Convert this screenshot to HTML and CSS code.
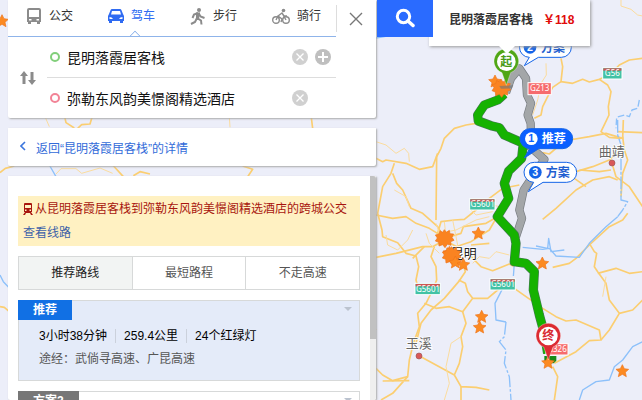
FILE: index.html
```html
<!DOCTYPE html>
<html lang="zh-CN">
<head>
<meta charset="utf-8">
<meta name="viewport" content="width=device-width, initial-scale=1">
<title>驾车路线</title>
<link rel="stylesheet" href="styles.css">
</head>
<body>
<svg class="map" viewBox="-1128 0 1926 1200" preserveAspectRatio="xMidYMin slice" role="img" aria-label="昆明路线地图">
  <defs>
    <path id="star" d="M0-19 6-7 19-5 9 4 12 17 0 10-12 17-9 4-19-5-6-7Z" fill="#fc8a22" stroke="#ee741b" stroke-width="2" stroke-linejoin="round"/>
    <path id="burst" d="M0-26 6-18 15-24 17-14 28-13 23-3 29 6 19 10 20 21 9 18 2 28-5 19-16 23-17 12-27 8-21-1-27-10-16-13-13-23-5-18Z" fill="#fa8321" stroke="#ed741d" stroke-width="2"/>
  </defs>

  <g class="road">
    <path d="M555 175 560 200 555 245 590 250 620 238 640 246 670 238 700 225 730 195 760 180 800 175"/>
    <path d="M555 245 530 262 515 290 500 320 495 345 475 355"/>
    <path d="M670 238 695 255 705 275 697 320 699 345 687 370 675 395 700 412 735 415"/>
    <path d="M300 370 270 375 235 385 205 415 195 445 182 470 180 660"/>
    <path d="M0 475 20 485 30 480 90 490 130 508 170 500 185 460"/>
    <path d="M55 490 45 520 20 560 5 640 18 690 20 710 65 728 90 760 120 768 128 800 120 840 128 870 150 880"/>
    <path d="M0 645 50 655 90 650 120 670 160 685 200 710"/>
    <path d="M50 520 62 550 80 570 105 625 140 640 185 680 205 715"/>
    <path d="M185 700 195 665 235 660 265 658 300 630 340 595 380 565 430 555"/>
    <path d="M205 715 255 700 262 680 330 670 362 652 340 690 285 725 240 740"/>
    <path d="M0 772 60 760 140 740 170 740 205 720 250 745 240 780"/>
    <path d="M145 740 110 775M175 740 165 770 180 800 182 840 170 870 150 910 125 940 130 980 112 1030 100 1080 95 1130 50 1142 20 1125 0 1105"/>
    <path d="M95 1130 50 1180 15 1200M100 1142 20 1143"/>
    <path d="M262 795 268 815 248 845 205 895 165 930 135 970 120 1030"/>
    <path d="M145 910 180 925 220 920 260 935 290 895M248 840 268 850 275 875 290 895 335 895 365 870 380 865"/>
    <path d="M260 935 270 970 255 1010 260 1040 250 1090 235 1125 255 1160 255 1200M125 1065 180 1095 235 1125M255 1160 300 1162 340 1170"/>
    <path d="M285 770 315 800 350 812 400 792 415 800M285 735 340 730"/>
    <path d="M415 865 450 890 500 925 540 950 570 963 600 960 670 990 675 1020 640 1022 600 1055 535 1090M530 1100 545 1130 535 1200"/>
    <path d="M675 1020 700 990 730 940 700 900 690 850 665 815 655 800 662 760 655 755 640 730M665 820 720 805 760 820 800 815M730 940 770 930 800 900"/>
    <path d="M500 458 520 462 540 445 580 420 640 410 690 400 740 415 742 360"/>
    <path d="M725 395 800 398M740 410 745 450 755 480 740 520 735 590M705 480 720 530 760 560 800 620"/>
    <path d="M500 658 540 625 600 570 650 540 700 530 725 540M600 515 650 500 700 480 735 445M610 510 670 515 705 510M595 535 630 560"/>
    <path d="M530 802 580 790 600 775 640 735 700 680 740 660 755 640"/>
    <path d="M-935 345-930 368-905 384M-850 345-858 372-883 374-895 385M-195 345-190 385M-1128 518-1112 505-1085 498M-790 495-758 530M-728 527-708 515-678 522M-400 498-370 508-385 530M-1128 920-1115 922-1100 935"/>
    <path d="M-28 960 0 990"/>
  </g>
  <g class="lane">
    <path d="M510 190 511 225 495 250 485 300 470 345M735 0 735 18 765 28 785 45 800 48"/>
    <path d="M0 425 30 435 60 460 85 445 98 460 100 485M55 570 90 590 100 620M30 705 35 735 65 750 95 720 110 690"/>
    <path d="M180 670 190 700 240 690 300 660 340 650M230 660 245 735M205 665 210 710M280 625 300 645 350 635M290 790 310 770 340 775 360 755 400 765M255 1010 225 1030 210 1100 220 1150 205 1200M690 830 680 890"/>
    <path d="M305 600 350 615 370 620M150 700 160 730 190 760"/>
    <path d="M-993 350-980 380M-440 350-438 382M-960 522-945 506-900 506-883 520-828 504-790 520"/>
  </g>
  <g class="river">
    <path d="M725 360 725 405 735 435 735 600 755 605 740 630 725 650" stroke-dasharray="38 5 9 5"/>
    <path d="M725 650 690 680 640 730 610 772 540 768 520 745 500 748 440 742"/>
    <path d="M790 300 785 325 768 330 760 350 745 345 722 352 720 385" stroke-dasharray="20 7"/>
    <path d="M380 865 357 910 360 960 390 966"/>
    <path d="M415 790 412 830M390 966 385 1010 370 1025 390 1050 385 1090 400 1130 405 1200" stroke-dasharray="38 6 8 6"/>
    <path d="M800 1025 770 1040 740 1080 715 1100 700 1140 660 1145 620 1170 610 1200M0 114 50 105 70 100M-1128 825-1118 845-1100 864M-980 495-960 530"/>
    <path d="M480 738 515 745 518 715 525 755 565 750"/>
  </g>

  <g class="route">
    <path class="alt-edge" d="M390 278 405 235 430 205 450 235 453 285 465 310 455 345 464 370 465 400 462 440 505 478 480 515 443 570 430 630 438 655 420 710"/>
    <path class="alt" d="M390 278 405 235 430 205 450 235 453 285 465 310 455 345 464 370 465 400 462 440 505 478 480 515 443 570 430 630 438 655 420 710"/>
    <path class="main-edge" d="M385 282 365 300 325 315 305 345 307 363 345 377 370 383 385 405 442 430 437 475 398 513 385 550 398 595 364 650 415 705 420 730 415 785 450 790 475 815 472 870 490 945 505 1000 515 1060"/>
    <path class="main" d="M385 282 365 300 325 315 305 345 307 363 345 377 370 383 385 405 442 430 437 475 398 513 385 550 398 595 364 650 415 705 420 730 415 785 450 790 475 815 472 870 490 945 505 1000 515 1060"/>
  </g>

  <g class="shield">
    <rect x="456" y="248" width="70" height="36" fill="#f66b6d"/><text x="491" y="273">G213</text>
    <rect x="680" y="203" width="58" height="34" fill="#42c2a5"/><path d="M682 205h54v7h-54z" fill="#cf5552"/><text x="709" y="229">G56</text>
    <rect x="281" y="596" width="76" height="34" fill="#42c2a5"/><path d="M283 598h72v7h-72z" fill="#cf5552"/><text x="320" y="622">G5601</text>
    <rect x="117" y="850" width="76" height="34" fill="#42c2a5"/><path d="M119 852h72v7h-72z" fill="#cf5552"/><text x="156" y="876">G5601</text>
    <rect x="342" y="836" width="76" height="34" fill="#42c2a5"/><path d="M344 838h72v7h-72z" fill="#cf5552"/><text x="381" y="862">G5601</text>
    <rect x="510" y="1031" width="66" height="34" fill="#f66b6d"/><text x="543" y="1056">G326</text>
  </g>

  <g class="place">
    <text x="224" y="775" class="city">昆明</text>
    <text x="668" y="467">曲靖</text><circle cx="708" cy="489" r="9"/>
    <text x="89" y="1045">玉溪</text><circle cx="129" cy="1068" r="9"/>
  </g>

  <use href="#burst" x="205" y="715"/>
  <use href="#star" x="220" y="758"/><use href="#burst" x="226" y="766"/><use href="#star" x="238" y="787"/><use href="#star" x="262" y="794"/>
  <use href="#star" x="307" y="700"/><use href="#star" x="499" y="790"/>
  <use href="#star" x="317" y="950"/><use href="#star" x="311" y="982"/><use href="#star" x="739" y="1113"/>
  <use href="#star" x="357" y="244"/><use href="#burst" x="375" y="264"/><use href="#star" x="-1122" y="63"/>
  <path d="M370 258 412 256 408 265 375 266Z" fill="#777" opacity=".65"/>
  <path d="M505 1068h36v14l-8 8h-28z" fill="#168b18"/><use href="#star" x="516" y="1088"/>

  <g class="pin">
    <path d="M391 256 378 218A37 37 0 1 1 404 218Z" fill="#50a616"/><circle cx="391" cy="185" r="28" fill="#fff"/><text x="391" y="198" fill="#4a9b17">起</text>
    <path d="M517 1080 503 1041A37 37 0 1 1 531 1041Z" fill="#dc2b32"/><circle cx="517" cy="1008" r="28" fill="#fff"/><text x="517" y="1021" fill="#d92b32">终</text>
  </g>

  <g class="callout">
    <path d="M461 112H556A30 30 0 0 1 556 172H487L445 197 460 172A30 30 0 0 1 461 112Z"/><circle cx="462" cy="142" r="19"/><text class="num" x="462" y="153">2</text><text x="495" y="155">方案</text>
    <g class="chosen"><path d="M463 386H560A30 30 0 0 1 560 446H488L445 474 461 446A30 30 0 0 1 463 386Z"/><circle cx="466" cy="416" r="19"/><text class="num" x="466" y="427">1</text><text x="497" y="429">推荐</text></g>
    <path d="M475 487H572A30 30 0 0 1 572 547H501L457 575 473 547A30 30 0 0 1 475 487Z"/><circle cx="478" cy="517" r="19"/><text class="num" x="478" y="528">3</text><text x="509" y="530">方案</text>
  </g>
</svg>

<aside class="hotel-tip"><strong>昆明落霞居客栈</strong><strong class="price">￥118</strong></aside>

<main class="overlay">
  <div class="sidebar">
    <section class="panel search">
      <nav class="modes">
        <button class="mode" type="button">
          <svg width="16" height="16" viewBox="0 0 16 16"><path fill="#8b8b8b" fill-rule="evenodd" d="M3 0h10q2 0 2 2v12H1V2q0-2 2-2Zm0 2v7h10V2ZM3 11v1.500h2.500v-1.500Zm7.500 0v1.500h2.500v-1.500ZM2 14h3v2H2Zm9 0h3v2h-3Z"/></svg>公交</button>
        <button class="mode active" type="button">
          <svg width="16" height="16" viewBox="0 0 16 16"><path fill="#2f6bf2" fill-rule="evenodd" d="M4 1h8q1 0 1.400 1L15 6l1 2v5H0V8l1-2L2.600 2Q3 1 4 1Zm0 2L3 6.500h10L12 3ZM1.500 9v2H5Q4 9 1.500 9Zm13 0Q12 9 11 11h3.500ZM1 13h3v2H1Zm11 0h3v2h-3Z"/></svg>驾车</button>
        <button class="mode" type="button">
          <svg width="16" height="17" viewBox="0 0 16 17"><circle cx="9" cy="2" r="2" fill="#8b8b8b"/><path d="M8 5 4 6.500 2.500 10M8.500 5l2 3.500 4 1.500M8.500 5 7 10l4 2.500.5 4M7 10l-2 4-4 2" fill="none" stroke="#8b8b8b" stroke-width="2"/><path d="M6 4.500h4L9 11H6Z" fill="#8b8b8b"/></svg>步行</button>
        <button class="mode" type="button">
          <svg width="18" height="17" viewBox="0 0 18 17"><g fill="none" stroke="#8b8b8b" stroke-width="1.400"><circle cx="4" cy="12" r="3.300"/><circle cx="14" cy="12" r="3.300"/><path d="M4 12 6 8l4 3-1 3M6 8l4-3 2 3h3M10 5l4 7"/></g><circle cx="11.500" cy="2.500" r="1.800" fill="#8b8b8b"/></svg>骑行</button>
      </nav>
      <button class="close" type="button" aria-label="关闭"><svg width="14" height="14" viewBox="0 0 14 14"><path d="m1 1 12 12M13 1 1 13" stroke="#777" stroke-width="1.400"/></svg></button>
      <form class="stops">
        <button class="swap" type="button" aria-label="交换起终点"><svg width="16" height="14" viewBox="0 0 16 14"><path d="M4 0 8 5H5.500v8h-3V5H0ZM12 14 8 9h2.500V1h3v8H16Z" fill="#8b8b8b"/></svg></button>
        <div class="fields">
          <div class="stop"><i class="dot from"></i><input type="text" aria-label="起点" value="昆明落霞居客栈">
            <button type="button" aria-label="清除起点"><svg width="16" height="16" viewBox="0 0 16 16"><circle cx="8" cy="8" r="8" fill="#d0d0d0"/><path d="m4.500 4.500 7 7m0-7-7 7" stroke="#fff" stroke-width="1.300"/></svg></button>
            <button type="button" aria-label="添加途经点"><svg width="16" height="16" viewBox="0 0 16 16"><circle cx="8" cy="8" r="8" fill="#bfbfbf"/><path d="M3 8h10M8 3v10" stroke="#fff" stroke-width="2"/></svg></button></div>
          <div class="stop"><i class="dot to"></i><input type="text" aria-label="终点" value="弥勒东风韵美憬阁精选酒店">
            <button type="button" aria-label="清除终点"><svg width="16" height="16" viewBox="0 0 16 16"><circle cx="8" cy="8" r="8" fill="#d0d0d0"/><path d="m4.500 4.500 7 7m0-7-7 7" stroke="#fff" stroke-width="1.300"/></svg></button></div>
        </div>
      </form>
    </section>

    <section class="panel back"><a href="#detail"><svg width="6" height="10" viewBox="0 0 6 10"><path d="M5 1 1 5l4 4" fill="none" stroke="#3c76dd" stroke-width="1.600"/></svg>返回“昆明落霞居客栈”的详情</a></section>

    <section class="panel results">
      <div class="list">
        <div class="notice">
          <p><svg width="10" height="12" viewBox="0 0 10 12"><path fill="#a8160e" fill-rule="evenodd" d="M2 0h6q1 0 1 1v8H8l2 3H8L7 10H3l-1 2H0l2-3H1V1q0-1 1-1Zm0 2v3h6V2Zm0 4.500V8h1.500V6.500Zm4.500 0V8H8V6.500Z"/></svg>从昆明落霞居客栈到弥勒东风韵美憬阁精选酒店的跨城公交</p>
          <a href="#bus">查看线路</a>
        </div>
        <div class="filters">
          <button class="on" type="button">推荐路线</button><button type="button">最短路程</button><button type="button">不走高速</button>
        </div>
        <article class="plan selected">
          <h2>推荐</h2>
          <p class="facts"><span>3小时38分钟</span><span>259.4公里</span><span>24个红绿灯</span></p>
          <p class="via">途经：武倘寻高速、广昆高速</p>
        </article>
        <article class="plan">
          <h2>方案2</h2>
        </article>
      </div>
      <div class="track"><div class="thumb"></div></div>
    </section>
  </div>
  <button class="go" type="button" aria-label="搜索"><svg width="20" height="20" viewBox="0 0 20 20"><circle cx="8.500" cy="8.500" r="6.200" fill="none" stroke="#fff" stroke-width="3"/><path d="m13 13 5 4.500" stroke="#fff" stroke-width="3.500" stroke-linecap="round"/></svg></button>
</main>
</body>
</html>
```
FILE: styles.css
```css
* { box-sizing: border-box; }

body {
  margin: 0;
  height: 100vh;
  overflow: hidden;
  position: relative;
  background: #eceef9;
  color: #333;
  font: 12px/20px "Liberation Sans", "Noto Sans CJK SC", sans-serif;
}

p, h2 { margin: 0; font-size: 12px; }
a { text-decoration: none; }

button, input {
  margin: 0;
  padding: 0;
  border: 0;
  background: none;
  color: inherit;
  font: inherit;
}

button { cursor: pointer; }
svg { flex: none; display: block; }

/* Map */
.map { position: absolute; inset: 0; width: 100%; height: 100%; }
.road, .lane, .river, .route { fill: none; stroke-linejoin: round; }
.road { stroke: #fbce71; stroke-width: 5; }
.lane { stroke: #fbdc9e; stroke-width: 3; }
.river { stroke: #8cc0fa; stroke-width: 4; }
.alt-edge { stroke: #777c80; stroke-width: 25; }
.alt { stroke: #a3a6a8; stroke-width: 21; }
.main-edge { stroke: #437a50; stroke-width: 28; }
.main { stroke: #15b200; stroke-width: 24; }
.shield rect { stroke: #fff; stroke-width: 3; }
.shield text { fill: #fff; font: 24px "Noto Sans", sans-serif; text-anchor: middle; }
.place text { fill: #666; font-size: 39px; stroke: #fff; stroke-width: 5; paint-order: stroke; }
.place .city { fill: #222; }
.place circle { fill: #d95858; stroke: #9a5656; stroke-width: 2; }
.pin text { font-size: 36px; font-weight: bold; text-anchor: middle; }
.pin path { stroke: #fff; stroke-width: 1; }
.callout path { fill: #fff; stroke: #1464e8; stroke-width: 3; }
.callout circle { fill: #1464e8; }
.callout text { fill: #1f5fd0; font-size: 36px; font-weight: bold; }
.callout .num { fill: #fff; font-size: 32px; text-anchor: middle; }
.callout .chosen path, .callout .chosen .num { fill: #0a5fff; }
.callout .chosen circle, .callout .chosen text { fill: #fff; }
.callout .chosen .num { fill: #0a5fff; }

.hotel-tip {
  position: absolute;
  top: 0;
  left: 429px;
  display: flex;
  gap: 10px;
  padding: 10px 16px 16px 20px;
  background: #fff;
  box-shadow: 1px 1px 3px #999;
}
.hotel-tip::after {
  content: "";
  position: absolute;
  left: 70px;
  top: 100%;
  border: 8px solid transparent;
  border-top-color: #fff;
  border-bottom: 0;
}
.price { color: #e10b0b; }

/* Panels over the map */
.overlay {
  position: relative;
  display: flex;
  align-items: flex-start;
  gap: 1px;
  height: 100%;
  padding-left: 8px;
}
.sidebar { display: flex; flex-direction: column; gap: 10px; width: 368px; height: 100%; }
.panel { background: #fff; box-shadow: 1px 1px 2px #aaa; border-radius: 0 0 2px 2px; }
.go { display: flex; justify-content: center; padding: 8px 18px 9px; background: #2a6bff; }

.search { display: grid; grid-template-columns: 1fr 40px; }
.modes { display: flex; border-bottom: 1px solid #8fb4ea; }
.mode {
  position: relative;
  flex: 1;
  display: flex;
  align-items: center;
  gap: 7px;
  height: 36px;
  padding: 0 0 4px 18px;
}
.active { color: #2f6bf2; }
.active::after {
  content: "";
  position: absolute;
  left: 41px;
  bottom: -4px;
  width: 7px;
  height: 7px;
  border: solid #8fb4ea;
  border-width: 1px 0 0 1px;
  background: #fff;
  transform: rotate(45deg);
  clip-path: polygon(0 0, 100% 0, 0 100%);
}
.close { margin: 5px 0; padding: 0 12px; border-left: 1px solid #ddd; }

.stops { grid-column: 1 / -1; display: flex; padding: 0 40px 0 12px; }
.fields { flex: 1; margin-left: 11px; }
.stop { display: flex; align-items: center; gap: 7px; height: 40px; padding: 0 5px 0 3px; }
.stop + .stop { border-top: 1px solid #ddd; height: 41px; padding-right: 28px; }
.stop input { flex: 1; min-width: 0; height: 24px; color: #111; font-size: 14px; outline: 0; }
.dot { width: 10px; height: 10px; border: 2px solid; border-radius: 50%; }
.from { color: #82cf7b; }
.to { color: #f28396; }

.back a { display: flex; align-items: center; gap: 10px; height: 38px; padding: 3px 0 0 12px; color: #326bd9; }
.back svg { margin-bottom: 6px; }

.results { display: flex; flex: 1; min-height: 0; overflow: hidden; }
.list { flex: 1; display: flex; flex-direction: column; gap: 10px; padding: 20px 10px 0; }
.track { width: 6px; background: #efefef; }
.thumb { height: 163px; background: #c1c1c1; border-radius: 0 3px 0 0; }

.notice { flex: none; height: 50px; padding: 1px 5px; background: #fff1c2; line-height: 24px; }
.notice p { display: flex; align-items: center; gap: 2px; color: #a8160e; white-space: nowrap; }
.notice a { color: #3e62a8; }

.filters { flex: none; display: flex; border: 1px solid #d7d9d9; }
.filters button { flex: 1; height: 32px; color: #555; }
.filters button + button { border-left: 1px solid #d7d9d9; }
.filters .on { background: #f2f4f3; color: #222; }

.plan { position: relative; flex: none; height: 81px; border: 1px solid #d7d9d9; }
.plan::after {
  content: "";
  position: absolute;
  top: 6px;
  right: 7px;
  border: 4px solid transparent;
  border-top-color: #bbc3cf;
  border-bottom: 0;
}
.plan h2 { width: max-content; margin: -1px 0 0 -1px; padding: 0 15px; background: #777; color: #fff; }
.plan.selected { background: #e4ebf9; }
.selected h2 { background: #1170e4; }
.facts { display: flex; align-items: center; height: 32px; padding-left: 20px; color: #000; }
.facts span + span { margin-left: 8px; padding-left: 8px; border-left: 1px solid #cbd1dc; line-height: 14px; }
.via { height: 20px; line-height: 14px; padding-left: 20px; color: #555; }
```
